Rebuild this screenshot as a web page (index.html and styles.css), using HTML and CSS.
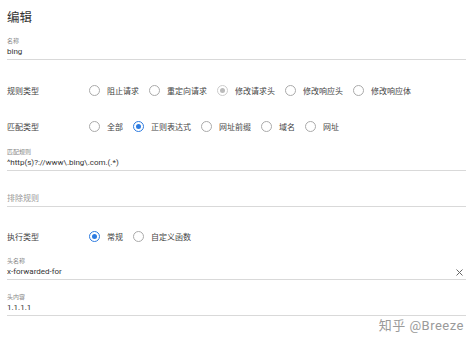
FILE: index.html
```html
<!DOCTYPE html>
<html lang="zh-CN">
<head>
    <meta charset="UTF-8">
    <title>编辑</title>
    <link rel="stylesheet" href="styles.css">
</head>
<body>
    <div class="editor">
        <h1 class="title">编辑</h1>

        <div class="field field-name">
            <div class="field-label">名称</div>
            <div class="field-value">bing</div>
        </div>

        <div class="row row-first">
            <div class="row-label">规则类型</div>
            <div class="radios">
                <span class="radio"></span><span class="radio-text">阻止请求</span>
                <span class="radio"></span><span class="radio-text">重定向请求</span>
                <span class="radio checked disabled"></span><span class="radio-text">修改请求头</span>
                <span class="radio"></span><span class="radio-text">修改响应头</span>
                <span class="radio"></span><span class="radio-text">修改响应体</span>
            </div>
        </div>

        <div class="row row-second">
            <div class="row-label">匹配类型</div>
            <div class="radios">
                <span class="radio"></span><span class="radio-text">全部</span>
                <span class="radio checked"></span><span class="radio-text">正则表达式</span>
                <span class="radio"></span><span class="radio-text">网址前缀</span>
                <span class="radio"></span><span class="radio-text">域名</span>
                <span class="radio"></span><span class="radio-text">网址</span>
            </div>
        </div>

        <div class="field field-match">
            <div class="field-label">匹配规则</div>
            <div class="field-value">^http(s)?://www\.bing\.com.(.*)</div>
        </div>

        <div class="field field-exclude">
            <div class="field-value placeholder">排除规则</div>
        </div>

        <div class="row row-exec">
            <div class="row-label">执行类型</div>
            <div class="radios">
                <span class="radio checked"></span><span class="radio-text">常规</span>
                <span class="radio"></span><span class="radio-text">自定义函数</span>
            </div>
        </div>

        <div class="field field-header">
            <div class="field-label">头名称</div>
            <div class="field-value with-clear">
                <span>x-forwarded-for</span>
                <svg class="clear" width="7" height="7" viewBox="0 0 7 7">
                    <path d="M0.5 0.5L6.5 6.5M6.5 0.5L0.5 6.5" stroke="#666" stroke-width="1" fill="none"/>
                </svg>
            </div>
        </div>

        <div class="field field-content">
            <div class="field-label">头内容</div>
            <div class="field-value">1.1.1.1</div>
        </div>

        <div class="watermark">知乎 @Breeze</div>
    </div>
</body>
</html>
```

FILE: styles.css
```css
body {
    margin: 0;
    padding: 0;
    background-color: #fff;
    color: #333;
    font-family: Roboto, "Noto Sans CJK SC", sans-serif;
}
.editor {
    position: relative;
    min-height: 340px;
    box-sizing: border-box;
    padding: 0 8px 0 7px;
}
.title {
    margin: 9px 0 0;
    font-size: 12.5px;
    line-height: 18px;
    font-weight: normal;
    color: #333;
}
.field {
    border-bottom: 1px solid #d9d9d9;
}
.field-label {
    font-size: 6px;
    line-height: 8px;
    color: #888;
}
.field-value {
    font-size: 8px;
    line-height: 14px;
    color: #333;
}
.placeholder {
    color: #999;
}
.with-clear {
    display: flex;
    justify-content: space-between;
    align-items: center;
}
.clear {
    margin-right: 3px;
}
.field-name {
    margin-top: 10px;
}
.field-match {
    margin-top: 14px;
}
.field-exclude {
    margin-top: 21px;
}
.field-header {
    margin-top: 13px;
}
.field-content {
    margin-top: 13px;
}
.row {
    display: flex;
    align-items: center;
    height: 16px;
    font-size: 8px;
}
.row-first {
    margin-top: 22px;
}
.row-second {
    margin-top: 20px;
}
.row-exec {
    margin-top: 21px;
}
.row-label {
    width: 82px;
    color: #444;
}
.radios {
    display: flex;
    align-items: center;
}
.radio {
    box-sizing: border-box;
    width: 11px;
    height: 11px;
    border: 1px solid #aaa;
    border-radius: 50%;
    margin-right: 7px;
    display: flex;
    align-items: center;
    justify-content: center;
}
.radio.checked {
    border-color: #2d7be0;
}
.radio.checked::after {
    content: "";
    width: 5px;
    height: 5px;
    border-radius: 50%;
    background-color: #2d7be0;
}
.radio.disabled {
    border-color: #ccc;
}
.radio.disabled::after {
    background-color: #bbb;
}
.radio-text {
    margin-right: 10px;
    color: #444;
}
.watermark {
    position: absolute;
    right: 10px;
    top: 309px;
    font-size: 13px;
    line-height: 16px;
    color: #9a9a9a;
    letter-spacing: 0.5px;
}
```
